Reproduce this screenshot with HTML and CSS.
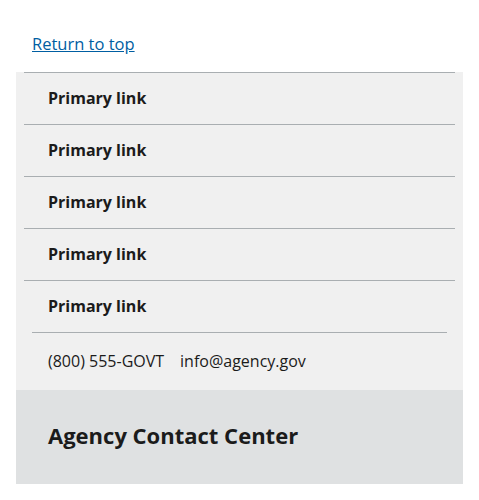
FILE: index.html
```html
<!DOCTYPE html>
<html lang="en">
<head>
<meta charset="utf-8">
<title>Footer</title>
<link rel="stylesheet" href="styles.css">
</head>
<body>
<footer class="footer">
  <div class="return">
    <a href="#top" class="return-link">Return to top</a>
  </div>
  <div class="primary">
    <ul class="nav">
      <li class="nav-item"><a href="#" class="nav-link">Primary link</a></li>
      <li class="nav-item"><a href="#" class="nav-link">Primary link</a></li>
      <li class="nav-item"><a href="#" class="nav-link">Primary link</a></li>
      <li class="nav-item"><a href="#" class="nav-link">Primary link</a></li>
      <li class="nav-item"><a href="#" class="nav-link">Primary link</a></li>
    </ul>
    <div class="contact">
      <a href="#" class="contact-link">(800) 555-GOVT</a>
      <a href="#" class="contact-link">info@agency.gov</a>
    </div>
  </div>
  <div class="secondary">
    <h3 class="center-heading">Agency Contact Center</h3>
  </div>
</footer>
</body>
</html>
```
FILE: styles.css
```css
html, body {
  margin: 0;
  padding: 0;
  background: #ffffff;
}
body {
  font-family: "Open Sans", "Liberation Sans", sans-serif;
  color: #1b1b1b;
}
.footer {
  padding: 0 16px;
}
.return {
  padding: 32px 16px 16px;
  line-height: 24px;
  font-size: 16.5px;
}
.return-link {
  color: #005ea2;
  text-decoration: underline;
}
.primary {
  background: #f0f0f0;
}
.nav {
  list-style: none;
  margin: 0 8px;
  padding: 0;
}
.nav-item {
  border-top: 1px solid #a9aeb1;
}
.nav-link {
  display: block;
  padding: 16px 24px;
  font-size: 16px;
  line-height: 19px;
  font-weight: 700;
  color: #1b1b1b;
  text-decoration: none;
}
.contact {
  margin: 0 16px;
  border-top: 1px solid #a9aeb1;
  padding: 16px 16px 17px;
  display: flex;
  gap: 16px;
  font-size: 16px;
  line-height: 24px;
}
.contact-link {
  color: #1b1b1b;
  text-decoration: none;
}
.secondary {
  background: #dfe1e2;
  padding: 32px 32px 36px;
}
.center-heading {
  margin: 0;
  font-size: 22px;
  line-height: 26px;
  font-weight: 700;
  color: #1b1b1b;
}
```
